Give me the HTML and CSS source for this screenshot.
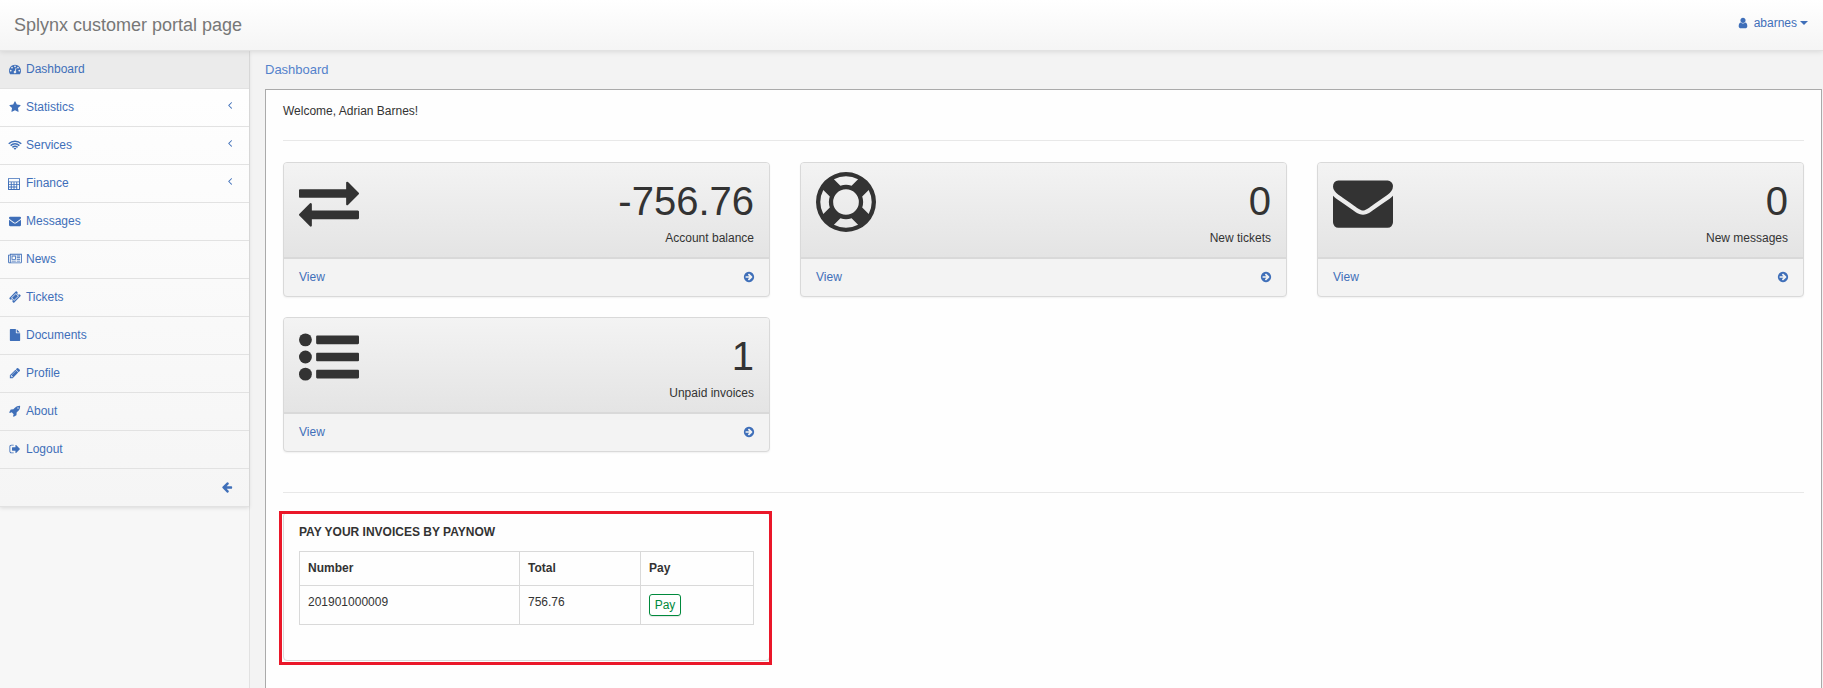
FILE: index.html
```html
<!DOCTYPE html>
<html lang="en">
<head>
<meta charset="utf-8">
<title>Splynx customer portal page</title>
<link rel="stylesheet" href="styles.css">
</head>
<body>
<svg class="sprite" aria-hidden="true">
<symbol id="tachometer" viewBox="0 0 1792 1792"><path d="M384 1152q0-53-37.500-90.500t-90.500-37.500-90.500 37.500-37.500 90.500 37.500 90.500 90.500 37.500 90.500-37.500 37.500-90.500zm192-448q0-53-37.500-90.500t-90.500-37.500-90.500 37.500-37.500 90.500 37.500 90.500 90.500 37.500 90.500-37.500 37.500-90.500zm428 481l101-382q6-26-7.500-48.500t-38.500-29.500-48 6.500-30 39.500l-101 382q-60 5-107 43.500t-63 98.500q-20 77 20 146t117 89 146-20 89-117q16-60-6-117t-72-91zm660-33q0-53-37.500-90.500t-90.500-37.500-90.500 37.500-37.500 90.500 37.500 90.500 90.500 37.500 90.500-37.500 37.500-90.500zm-640-640q0-53-37.500-90.500t-90.500-37.500-90.500 37.500-37.500 90.500 37.500 90.500 90.500 37.500 90.500-37.500 37.500-90.500zm448 192q0-53-37.500-90.500t-90.500-37.500-90.500 37.500-37.500 90.500 37.500 90.500 90.500 37.500 90.500-37.500 37.500-90.500zm320 448q0 261-141 483-19 29-54 29h-1402q-35 0-54-29-141-221-141-483 0-182 71-348t191-286 286-191 348-71 348 71 286 191 191 286 71 348z"/></symbol>
<symbol id="star" viewBox="0 0 1792 1792"><path d="M1728 647q0 22-26 48l-363 354 86 500q1 7 1 20 0 21-10.500 35.500t-30.500 14.500q-19 0-40-12l-449-236-449 236q-22 12-40 12-21 0-31.500-14.500t-10.500-35.500q0-6 2-20l86-500-364-354q-25-27-25-48 0-37 56-46l502-73 225-455q19-41 49-41t49 41l225 455 502 73q56 9 56 46z"/></symbol>
<symbol id="wifi" viewBox="0 0 2048 1792"><g fill="none" stroke="currentColor" stroke-width="220"><path d="M90 720Q480 330 1024 330T1958 720"/><path d="M370 985Q650 720 1024 720T1678 985"/><path d="M640 1255Q810 1095 1024 1095T1408 1255"/></g><path d="M810 1400Q1024 1240 1238 1400L1024 1620z"/></symbol>
<symbol id="calculator" viewBox="0 0 1792 1792"><path fill-rule="evenodd" d="M128 0h1536q128 0 128 128v1536q0 128-128 128H128q-128 0-128-128V128Q0 0 128 0zm0 128v384h1536V128zm20 512v240h270V640zm410 0v240h270V640zm410 0v240h270V640zm410 0v240h270V640zM148 1020v240h270v-240zm410 0v240h270v-240zm410 0v240h270v-240zM148 1400v240h270v-240zm410 0v240h270v-240zm410 0v240h270v-240zm410-380v620h270v-620z"/></symbol>
<symbol id="envelope" viewBox="0 0 1792 1792"><path d="M1792 710v794q0 66-47 113t-113 47h-1472q-66 0-113-47t-47-113v-794q44 49 101 87 362 246 497 345 57 42 92.500 65.500t94.500 48 110 24.500h2q51 0 110-24.500t94.500-48 92.500-65.500q170-123 498-345 57-39 100-87zm0-294q0 79-49 151t-122 123q-376 261-468 325-10 7-42.500 30.500t-54 38-52 32.500-57.500 27-50 9h-2q-23 0-50-9t-57.500-27-52-32.500-54-38-42.500-30.500q-91-64-262-182.500t-205-142.500q-62-42-117-115.500t-55-136.500q0-78 41.500-130t118.500-52h1472q65 0 112.500 47t47.500 113z"/></symbol>
<symbol id="newspaper" viewBox="0 0 2048 1792"><path d="M1024 512h-384v384h384v-384zm128 640v128h-640v-128h640zm0-768v640h-640v-640h640zm640 768v128h-512v-128h512zm0-256v128h-512v-128h512zm0-256v128h-512v-128h512zm0-256v128h-512v-128h512zm-1536 960v-960h-128v960q0 26 19 45t45 19 45-19 19-45zm1664 0v-1088h-1536v1088q0 33-11 64h1483q26 0 45-19t19-45zm128-1216v1216q0 80-56 136t-136 56h-1664q-80 0-136-56t-56-136v-1088h256v-128h1792z"/></symbol>
<symbol id="ticket" viewBox="0 0 1792 1792"><path d="M1024 452l316 316-572 572-316-316zm-211 979l618-618q19-19 19-45t-19-45l-362-362q-18-18-45-18t-45 18l-618 618q-19 19-19 45t19 45l362 362q18 18 45 18t45-18zm889-637l-907 908q-37 37-90.500 37t-90.500-37l-126-126q56-56 56-136t-56-136-136-56-136 56l-125-126q-37-37-37-90.500t37-90.500l907-906q37-37 90.500-37t90.500 37l125 125q-56 56-56 136t56 136 136 56 136-56l126 125q37 37 37 90.500t-37 90.500z"/></symbol>
<symbol id="file" viewBox="0 0 1792 1792"><path d="M1152 512v-472q22 14 36 28l408 408q14 14 28 36h-472zm-128 32q0 40 28 68t68 28h544v1056q0 40-28 68t-68 28h-1344q-40 0-68-28t-28-68v-1600q0-40 28-68t68-28h800v544z"/></symbol>
<symbol id="pencil" viewBox="0 0 1792 1792"><path d="M491 1536l91-91-235-235-91 91v107h128v128h107zm523-928q0-22-22-22-10 0-17 7l-542 542q-7 7-7 17 0 22 22 22 10 0 17-7l542-542q7-7 7-17zm-54-192l416 416-832 832h-416v-416zm683 96q0 53-37 90l-166 166-416-416 166-165q36-38 90-38 53 0 91 38l235 234q37 39 37 91z"/></symbol>
<symbol id="rocket" viewBox="0 0 1792 1792"><path d="M1440 448q0-40-28-68t-68-28-68 28-28 68 28 68 68 28 68-28 28-68zm224-288q0 249-75.500 430.500t-253.500 360.500q-81 80-195 176l-20 379q-2 16-16 26l-384 224q-7 4-16 4-12 0-23-9l-64-64q-13-14-8-32l85-276-281-281-276 85q-3 1-9 1-14 0-23-9l-64-64q-17-19-5-39l224-384q10-14 26-16l379-20q96-114 176-195 188-187 358-258t431-71q14 0 24 9.500t10 22.500z"/></symbol>
<symbol id="sign-out" viewBox="0 0 1792 1792"><path d="M704 1440q0 4 1 20t.5 26.500-3 23.500-10 19.500-20.500 6.500h-320q-119 0-203.500-84.500t-84.500-203.500v-704q0-119 84.500-203.500t203.500-84.500h320q13 0 22.500 9.500t9.500 22.500q0 4 1 20t.5 26.500-3 23.500-10 19.500-20.500 6.500h-320q-66 0-113 47t-47 113v704q0 66 47 113t113 47h312l11.500 1 11.500 3 8 5.500 7 9 2 13.500zm928-544q0 26-19 45l-544 544q-19 19-45 19t-45-19-19-45v-288h-448q-26 0-45-19t-19-45v-384q0-26 19-45t45-19h448v-288q0-26 19-45t45-19 45 19l544 544q19 19 19 45z"/></symbol>
<symbol id="arrow-left" viewBox="0 0 1792 1792"><path d="M1664 896v128q0 53-32.500 90.500t-84.500 37.500h-704l293 294q38 36 38 90t-38 90l-75 76q-37 37-90 37-52 0-91-37l-651-652q-37-37-37-90 0-52 37-91l651-650q38-38 91-38 52 0 90 38l75 74q38 38 38 91t-38 91l-293 293h704q52 0 84.500 37.500t32.500 90.500z"/></symbol>
<symbol id="user" viewBox="0 0 1792 1792"><path d="M1536 1399q0 109-62.500 187t-150.500 78h-854q-88 0-150.500-78t-62.500-187q0-85 8.500-160.500t31.500-152 58.500-131 94-89 134.500-34.500q131 128 313 128t313-128q76 0 134.500 34.500t94 89 58.500 131 31.500 152 8.500 160.500zm-256-887q0 159-112.500 271.500t-271.500 112.500-271.500-112.500-112.500-271.500 112.500-271.500 271.500-112.500 271.500 112.500 112.500 271.500z"/></symbol>
<symbol id="angle-left" viewBox="0 0 1792 1792"><path d="M1203 544q0 13-10 23l-393 393 393 393q10 10 10 23t-10 23l-50 50q-10 10-23 10t-23-10l-466-466q-10-10-10-23t10-23l466-466q10-10 23-10t23 10l50 50q10 10 10 23z"/></symbol>
<symbol id="exchange" viewBox="0 0 1792 1792"><path d="M1792 1184v192q0 13-9.500 22.500t-22.500 9.500h-1376v192q0 13-9.500 22.500t-22.500 9.500q-12 0-24-10l-319-320q-9-9-9-22 0-14 9-23l320-320q9-9 23-9 13 0 22.500 9.500t9.500 22.500v192h1376q13 0 22.500 9.500t9.500 22.500zm0-544q0 14-9 23l-320 320q-9 9-23 9-13 0-22.500-9.500t-9.500-22.500v-192h-1376q-13 0-22.500-9.500t-9.500-22.500v-192q0-13 9.500-22.500t22.500-9.500h1376v-192q0-14 9-23t23-9q12 0 24 10l319 319q9 9 9 23z"/></symbol>
<symbol id="life-ring" viewBox="0 0 1792 1792"><path d="M896 0q182 0 348 71t286 191 191 286 71 348-71 348-191 286-286 191-348 71-348-71-286-191-191-286-71-348 71-348 191-286 286-191 348-71zm0 128q-190 0-361 90l194 194q82-28 167-28t167 28l194-194q-171-90-361-90zm-678 1129l194-194q-28-82-28-167t28-167l-194-194q-90 171-90 361t90 361zm678 407q190 0 361-90l-194-194q-82 28-167 28t-167-28l-194 194q171 90 361 90zm0-384q159 0 271.500-112.500t112.500-271.500-112.500-271.500-271.500-112.500-271.500 112.500-112.500 271.500 112.500 271.500 271.500 112.500zm484-217l194 194q90-171 90-361t-90-361l-194 194q28 82 28 167t-28 167z"/></symbol>
<symbol id="list" viewBox="0 0 1792 1792"><circle cx="192" cy="384" r="192"/><circle cx="192" cy="896" r="192"/><circle cx="192" cy="1408" r="192"/><rect x="512" y="256" width="1280" height="256" rx="32"/><rect x="512" y="768" width="1280" height="256" rx="32"/><rect x="512" y="1280" width="1280" height="256" rx="32"/></symbol>
<symbol id="arrow-circle" viewBox="0 0 1792 1792"><path d="M1413 896q0-27-18-45l-91-91-362-362q-18-18-45-18t-45 18l-91 91q-18 18-18 45t18 45l189 189h-502q-26 0-45 19t-19 45v128q0 26 19 45t45 19h502l-189 189q-19 19-19 45t19 45l91 91q18 18 45 18t45-18l362-362 91-91q18-18 18-45zm251 0q0 209-103 385.500t-279.500 279.500-385.500 103-385.500-103-279.500-279.500-103-385.500 103-385.500 279.500-279.500 385.500-103 385.500 103 279.500 279.500 103 385.500z"/></symbol>
</svg>

<header class="topbar">
  <span class="brand">Splynx customer portal page</span>
  <a class="account"><svg class="icon"><use href="#user"/></svg><span>abarnes</span><i class="caret"></i></a>
</header>

<div class="layout">
  <aside class="sidebar">
    <nav class="menu">
      <a class="item active"><svg class="icon"><use href="#tachometer"/></svg>Dashboard</a>
      <a class="item"><svg class="icon"><use href="#star"/></svg>Statistics<svg class="arrow"><use href="#angle-left"/></svg></a>
      <a class="item"><svg class="icon wide"><use href="#wifi"/></svg>Services<svg class="arrow"><use href="#angle-left"/></svg></a>
      <a class="item"><svg class="icon grid"><use href="#calculator"/></svg>Finance<svg class="arrow"><use href="#angle-left"/></svg></a>
      <a class="item"><svg class="icon"><use href="#envelope"/></svg>Messages</a>
      <a class="item"><svg class="icon wide"><use href="#newspaper"/></svg>News</a>
      <a class="item"><svg class="icon"><use href="#ticket"/></svg>Tickets</a>
      <a class="item"><svg class="icon"><use href="#file"/></svg>Documents</a>
      <a class="item"><svg class="icon"><use href="#pencil"/></svg>Profile</a>
      <a class="item"><svg class="icon"><use href="#rocket"/></svg>About</a>
      <a class="item"><svg class="icon"><use href="#sign-out"/></svg>Logout</a>
      <a class="item collapse"><svg class="icon"><use href="#arrow-left"/></svg></a>
    </nav>
  </aside>

  <main class="content">
    <div class="breadcrumb">Dashboard</div>
    <section class="page">
      <p class="welcome">Welcome, Adrian Barnes!</p>
      <div class="rule"></div>
      <div class="cards">
        <article class="card">
          <div class="card-head"><svg class="big"><use href="#exchange"/></svg><div class="stat"><div class="value">-756.76</div><div>Account balance</div></div></div>
          <a class="card-foot">View<svg class="icon"><use href="#arrow-circle"/></svg></a>
        </article>
        <article class="card">
          <div class="card-head"><svg class="big"><use href="#life-ring"/></svg><div class="stat"><div class="value">0</div><div>New tickets</div></div></div>
          <a class="card-foot">View<svg class="icon"><use href="#arrow-circle"/></svg></a>
        </article>
        <article class="card">
          <div class="card-head"><svg class="big"><use href="#envelope"/></svg><div class="stat"><div class="value">0</div><div>New messages</div></div></div>
          <a class="card-foot">View<svg class="icon"><use href="#arrow-circle"/></svg></a>
        </article>
        <article class="card">
          <div class="card-head"><svg class="big"><use href="#list"/></svg><div class="stat"><div class="value">1</div><div>Unpaid invoices</div></div></div>
          <a class="card-foot">View<svg class="icon"><use href="#arrow-circle"/></svg></a>
        </article>
      </div>
      <div class="rule"></div>
      <div class="invoices">
        <h2 class="invoices-title">PAY YOUR INVOICES BY PAYNOW</h2>
        <table class="table">
          <tr><th class="col-number">Number</th><th class="col-total">Total</th><th>Pay</th></tr>
          <tr><td>201901000009</td><td>756.76</td><td><a class="pay">Pay</a></td></tr>
        </table>
        <div class="highlight"></div>
      </div>
    </section>
  </main>
</div>
</body>
</html>
```
FILE: styles.css
```css
* { box-sizing: border-box; }

body {
  margin: 0;
  height: 688px;
  overflow: hidden;
  display: flex;
  flex-direction: column;
  background: #f3f3f3;
  color: #333;
  font: 12px/17px "Liberation Sans", Arial, sans-serif;
}

.sprite { position: absolute; width: 0; height: 0; }

svg { display: block; flex: none; fill: currentColor; }

.icon { width: 12px; height: 12px; }
.icon.wide { width: 14px; }

.topbar {
  position: relative;
  z-index: 1;
  flex: none;
  height: 51px;
  padding: 0 15px 0 14px;
  display: flex;
  justify-content: space-between;
  background: linear-gradient(#fff, #f5f5f5);
  border-bottom: 1px solid #e2e2e2;
  box-shadow: 0 1px 5px rgba(0, 0, 0, .1);
}

.brand { font-size: 18px; line-height: 50px; color: #777; }

.account {
  display: flex;
  align-items: center;
  height: 46px;
  color: #3f6fb9;
}
.account .icon { margin-right: 5px; }
.caret {
  margin-left: 3px;
  border: 4px solid transparent;
  border-top-color: currentColor;
  border-bottom: 0;
}

.layout { flex: 1; display: flex; min-height: 0; }

.sidebar {
  flex: none;
  width: 250px;
  background: #f7f7f7;
  border-right: 1px solid #e2e2e2;
}

.menu {
  background: linear-gradient(#fff, #f5f5f5);
  box-shadow: 0 1px 4px rgba(0, 0, 0, .12);
}

.item {
  display: flex;
  align-items: center;
  height: 38px;
  padding: 0 17px 0 7px;
  border-bottom: 1px solid #e2e2e2;
  color: #3f6fb9;
}
.item .icon { margin: 0 5.300px 2px 1.700px; }
.item .icon.wide { margin: 0 4px 2px 1px; }
.item .icon.grid { margin: 0 6px 0 1px; }
.item.active { background: #ebebeb; }
.item.collapse { justify-content: flex-end; padding-right: 16px; }
.item.collapse .icon { margin: 0 0 1px; }
.arrow { width: 12px; height: 12px; margin: 0 -4px 5px auto; }

.content { flex: 1; min-width: 0; padding: 0 1px 0 15px; display: flex; flex-direction: column; }

.breadcrumb { flex: none; height: 38px; font-size: 13px; line-height: 37px; color: #5482cb; }

.page {
  flex: 1;
  min-height: 0;
  padding: 13px 17px 0;
  background: #fefefe;
  border: 1px solid #aaa;
  border-bottom: 0;
}

.welcome { margin: 0 0 20px; }

.rule { height: 1px; background: #e8e8e8; }

.cards {
  display: grid;
  grid-template-columns: repeat(3, 487px);
  gap: 20px 30px;
  margin: 21px 0 40px;
}

.card {
  height: 135px;
  border: 1px solid #d9d9d9;
  border-radius: 4px;
  box-shadow: 0 1px 2px rgba(0, 0, 0, .06);
  background: #f3f3f3;
}

.card-head {
  display: flex;
  justify-content: space-between;
  height: 96px;
  padding: 9px 15px;
  border-bottom: 2px solid #d9d9d9;
  border-radius: 3px 3px 0 0;
  background: linear-gradient(#f3f3f3, #e4e4e4);
}

.big { width: 60px; height: 60px; margin-top: .4px; }
.stat { padding-top: 9px; text-align: right; }
.value { height: 49px; font-size: 40px; line-height: 40px; }

.card-foot {
  display: flex;
  justify-content: space-between;
  align-items: center;
  height: 36px;
  padding: 0 14px 0 15px;
  color: #3f6fb9;
}

.invoices {
  position: relative;
  width: 487px;
  height: 149px;
  margin-top: 19px;
  padding: 11px 15px;
  border: 1px solid #d9d9d9;
  border-radius: 4px;
}

.invoices-title { margin: 0 0 10px; font-size: 12px; line-height: 17px; font-weight: bold; }

.table { width: 455px; border-collapse: collapse; table-layout: fixed; }
.table th, .table td { padding: 8px; border: 1px solid #d9d9d9; text-align: left; vertical-align: top; }
.col-number { width: 220px; }
.col-total { width: 121px; }

.pay {
  display: block;
  width: 32px;
  height: 22px;
  border: 1px solid #00893c;
  border-radius: 3px;
  color: #00893c;
  line-height: 20px;
  text-align: center;
  box-shadow: 0 1px 1px rgba(0, 0, 0, .1);
}

/* Callout frame over the payment panel */
.highlight {
  position: absolute;
  inset: -2px -3px -5px -5px;
  border: 3px solid #ea1729;
}
```
